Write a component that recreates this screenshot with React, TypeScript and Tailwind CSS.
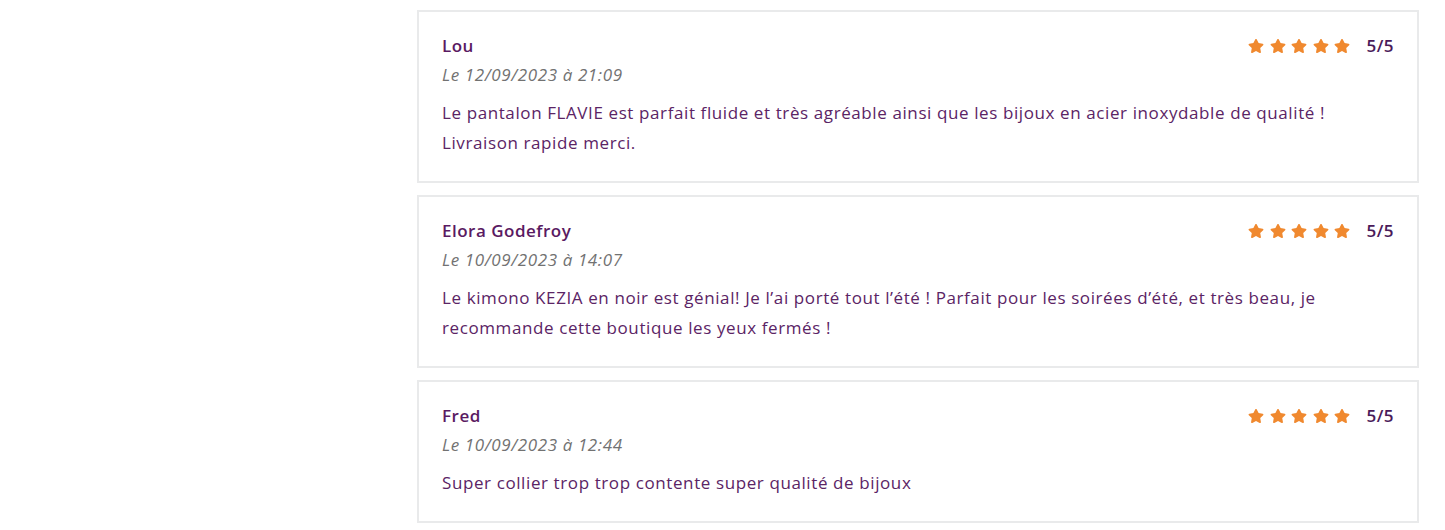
import React from "react";
import { FaStar } from "react-icons/fa";

const reviews = [
  {
    name: "Lou",
    date: "Le 12/09/2023 à 21:09",
    text: "Le pantalon FLAVIE est parfait fluide et très agréable ainsi que les bijoux en acier inoxydable de qualité ! Livraison rapide merci.",
  },
  {
    name: "Elora Godefroy",
    date: "Le 10/09/2023 à 14:07",
    text: "Le kimono KEZIA en noir est génial! Je l’ai porté tout l’été ! Parfait pour les soirées d’été, et très beau, je recommande cette boutique les yeux fermés !",
  },
  {
    name: "Fred",
    date: "Le 10/09/2023 à 12:44",
    text: "Super collier trop trop contente super qualité de bijoux",
  },
];

export default function App() {
  return (
    <div
      className="w-[1445px] h-[530px] bg-white overflow-hidden flex"
      style={{ fontFamily: '"Open Sans", "Liberation Sans", sans-serif' }}
    >
      <div className="w-[417px] shrink-0" />
      <div className="w-[1002px] flex flex-col gap-[12px] pt-[10px]">
        {reviews.map((r) => (
          <div
            key={r.name}
            className="border-2 border-[#e9eaeb] pt-[22px] pb-[23px] pl-[23px] pr-[23px]"
          >
            <div className="flex items-center justify-between h-[24px]">
              <div className="text-[17px] font-semibold tracking-[0.5px] text-[#5a1a62]">{r.name}</div>
              <div className="flex items-center">
                <div className="flex gap-[5.5px] text-[#f0892f]">
                  {[0, 1, 2, 3, 4].map((i) => (
                    <FaStar key={i} className="w-[16px] h-[16px]" />
                  ))}
                </div>
                <span className="ml-[16px] text-[17px] tracking-[0.5px] text-[#4a1a5a] font-semibold">5/5</span>
              </div>
            </div>
            <div className="mt-[5px] h-[24px] leading-[24px] text-[17px] tracking-[0.6px] italic text-[#727272]">
              {r.date}
            </div>
            <p className="mt-[11px] text-[17px] leading-[30px] tracking-[0.6px] text-[#5b2465] pr-[50px]">
              {r.text}
            </p>
          </div>
        ))}
      </div>
    </div>
  );
}
